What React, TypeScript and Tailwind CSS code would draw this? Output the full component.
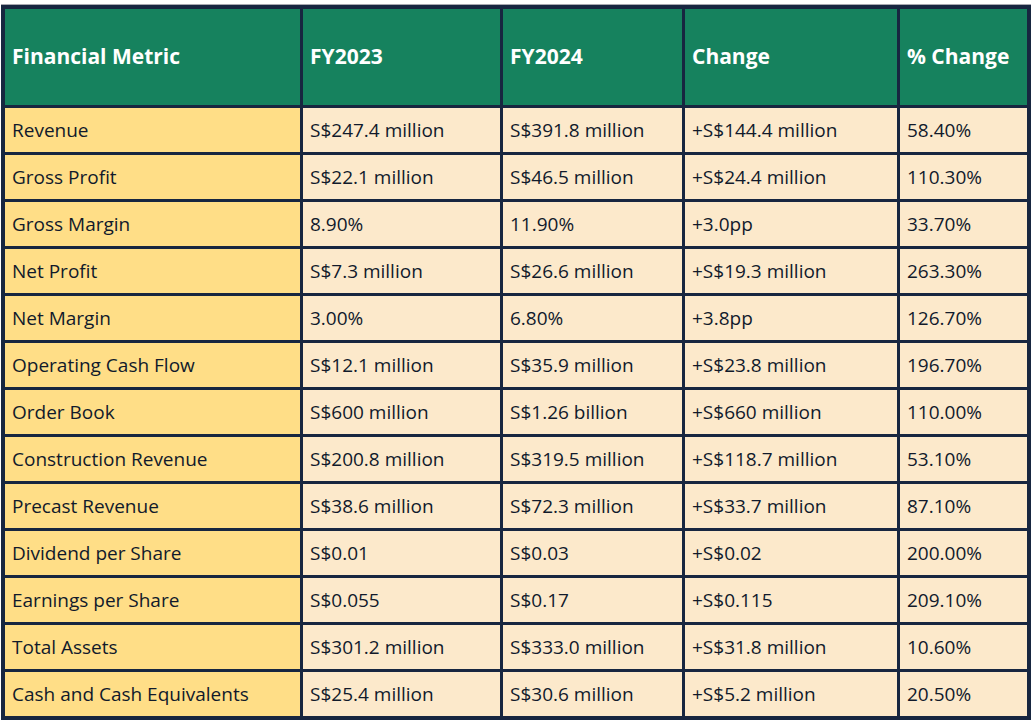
import React from "react";

const rows: string[][] = [
  ["Revenue", "S$247.4 million", "S$391.8 million", "+S$144.4 million", "58.40%"],
  ["Gross Profit", "S$22.1 million", "S$46.5 million", "+S$24.4 million", "110.30%"],
  ["Gross Margin", "8.90%", "11.90%", "+3.0pp", "33.70%"],
  ["Net Profit", "S$7.3 million", "S$26.6 million", "+S$19.3 million", "263.30%"],
  ["Net Margin", "3.00%", "6.80%", "+3.8pp", "126.70%"],
  ["Operating Cash Flow", "S$12.1 million", "S$35.9 million", "+S$23.8 million", "196.70%"],
  ["Order Book", "S$600 million", "S$1.26 billion", "+S$660 million", "110.00%"],
  ["Construction Revenue", "S$200.8 million", "S$319.5 million", "+S$118.7 million", "53.10%"],
  ["Precast Revenue", "S$38.6 million", "S$72.3 million", "+S$33.7 million", "87.10%"],
  ["Dividend per Share", "S$0.01", "S$0.03", "+S$0.02", "200.00%"],
  ["Earnings per Share", "S$0.055", "S$0.17", "+S$0.115", "209.10%"],
  ["Total Assets", "S$301.2 million", "S$333.0 million", "+S$31.8 million", "10.60%"],
  ["Cash and Cash Equivalents", "S$25.4 million", "S$30.6 million", "+S$5.2 million", "20.50%"],
];

const headers = ["Financial Metric", "FY2023", "FY2024", "Change", "% Change"];

export default function App() {
  return (
    <div className="w-[1035px] h-[723px] bg-white pt-[5px] pl-[1px]" style={{ fontFamily: '"Open Sans", sans-serif' }}>
      <div className="w-[1030px] border-4 border-[#172640] bg-[#172640] shadow-[0_-1px_0_#a8a8b0] grid grid-cols-[295px_197px_179px_212px_127px] grid-rows-[96px_repeat(13,44px)] gap-[3px]">
        {headers.map((h) => (
          <div key={h} className="bg-[#16825e] text-white font-bold text-[21px] flex items-center pl-[7px]">
            {h}
          </div>
        ))}
        {rows.map((r) =>
          r.map((c, i) => (
            <div
              key={r[0] + i}
              className={`${i === 0 ? "bg-[#ffde87]" : "bg-[#fce9cb]"} text-[#111a2b] text-[19px] flex items-center pl-[7px]`}
            >
              {c}
            </div>
          ))
        )}
      </div>
    </div>
  );
}
